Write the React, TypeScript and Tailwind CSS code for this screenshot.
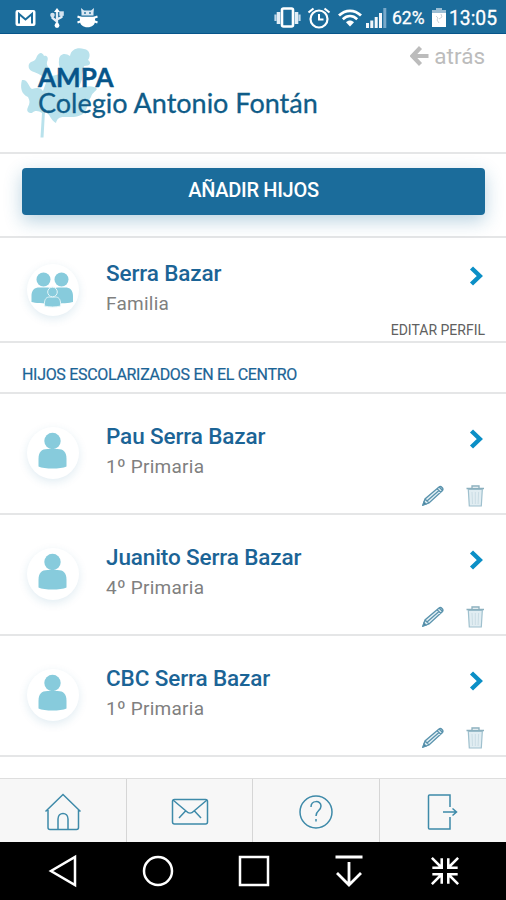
import React from 'react'

type Child = {
  name: string
  grade: string
}

const children: Child[] = [
  { name: 'Pau Serra Bazar', grade: '1º Primaria' },
  { name: 'Juanito Serra Bazar', grade: '4º Primaria' },
  { name: 'CBC Serra Bazar', grade: '1º Primaria' },
]

const StatusBar = () => {
  return (
    <div className="flex h-[34px] items-center justify-between border-b border-[#07558a] bg-[#1b6c9b] pl-[15px] pr-[9px] pt-[2px] text-white">
      <div className="flex items-center">
        <svg width="21" height="18" viewBox="0 0 21 18">
          <rect x="0.5" y="1" width="20" height="16" rx="2" fill="#fff" />
          <path d="M4 14.500V5l6.500 5.500L17 5v9.500" fill="none" stroke="#1b6c9b" strokeWidth="2" />
        </svg>
        <svg className="ml-[14px]" width="14" height="20" viewBox="0 0 14 20">
          <path d="M7 3v15M2.500 6v4L7 13.500M11.500 5v4L7 11.500" fill="none" stroke="#e4edf6" strokeWidth="2.300" />
          <path d="M7 0l3 4H4z" fill="#fff" />
          <circle cx="2.500" cy="7" r="2.300" fill="#d5e3ef" />
          <rect x="9.300" y="3.300" width="4.500" height="4.500" fill="#d5e3ef" />
          <circle cx="7" cy="17.500" r="2.400" fill="#fff" />
        </svg>
        <svg className="ml-[13px]" width="21" height="20" viewBox="0 0 21 20">
          <path d="M4.500 7.500V4.800L4 0l3 2.500h7L17 0l-.5 4.800v2.700z" fill="#dbe8f3" />
          <path d="M3 8.800h15v4.500c0 3.500-3 6-7.500 6s-7.500-2.500-7.500-6z" fill="#fff" />
          <path d="M.5 8.500l4 1.500M20.500 8.500l-4 1.500M.5 14.500l4-1.500M20.500 14.500l-4-1.500" stroke="#fff" strokeWidth="2" />
          <circle cx="8" cy="5" r="0.900" fill="#1b6c9b" />
          <circle cx="13" cy="5" r="0.900" fill="#1b6c9b" />
        </svg>
      </div>
      <div className="flex items-center">
        <svg width="27" height="22" viewBox="0 0 27 22">
          <rect x="8" y="1.500" width="11" height="18" rx="1.500" fill="none" stroke="#fff" strokeWidth="2.600" />
          <path d="M4.500 5v12M22.500 5v12" stroke="#e2edf6" strokeWidth="3.600" />
          <path d="M1.500 7.500v6.500M25.500 7.500v6.500" stroke="#bfd6e8" strokeWidth="2.200" />
        </svg>
        <svg className="ml-[6px]" width="24" height="22" viewBox="0 0 24 22">
          <circle cx="12" cy="12" r="8.500" fill="none" stroke="#fff" strokeWidth="2.200" />
          <path d="M12 7v5.500h4.500" fill="none" stroke="#fff" strokeWidth="2" />
          <path d="M1.500 5.500L6.500 1.500M22.500 5.500l-5-4" stroke="#fff" strokeWidth="2.200" />
        </svg>
        <svg className="ml-[7px]" width="24" height="18" viewBox="0 0 24 18">
          <path d="M1 6.500C7.500.2 16.500.2 23 6.500" fill="none" stroke="#fff" strokeWidth="2.800" />
          <path d="M4.800 10.200c4.400-4.100 10-4.100 14.400 0" fill="none" stroke="#fff" strokeWidth="2.600" />
          <path d="M8 13.300c2.500-2.300 5.500-2.300 8 0L12 17.500z" fill="#fff" />
        </svg>
        <svg className="ml-[4px]" width="21" height="20" viewBox="0 0 21 20">
          <path d="M0 15h3v5H0zM4.300 12.500h3V20h-3zM8.700 9h3v11h-3zM13 5h3v15h-3z" fill="#f3f7fb" />
          <path d="M17.300 0h3v20h-3z" fill="#78a9ca" />
        </svg>
        <span className="ml-[5px] w-[34px] whitespace-nowrap pt-[2px] font-[Roboto,sans-serif] text-[17.500px] leading-none [-webkit-text-stroke:0.300px]">62%</span>
        <svg className="ml-[6px]" width="14" height="19" viewBox="0 0 14 19">
          <path d="M4 0h6v2h4v4H0V2h4z" fill="#9bbdd3" />
          <path d="M0 5h14v14H0z" fill="#fff" />
          <path d="M4 8l2 2-1 2 2 3M9 6l1 3-3 2" fill="none" stroke="#ccd3d8" />
        </svg>
        <span className="ml-[3px] w-[48px] whitespace-nowrap pt-[2px] font-[Roboto,sans-serif] text-[19.300px] leading-none [-webkit-text-stroke:0.300px]">13:05</span>
      </div>
    </div>
  )
}

const Leaf = () => {
  return (
    <svg className="absolute left-[20px] top-[12px]" width="80" height="94" viewBox="20 46 80 94">
      <path
        d="M47 80C44 77 40 74 34 72C28 71 27 64 31 62C35 61 36 59 37 56C40 51 43 53 44 56C47 55 49 58 47 62C46 67 51 69 52 76L60 74C62 69 58 67 59 60C59 54 65 52 70 56C71 49 78 47 84 49C90 50 91 56 88 60C92 63 90 66 84 66L82 75C83 80 80 83 79 88C86 86 94 85 97 89C95 92 92 93 91 97C88 101 88 107 85 112C80 118 70 117 64 117C59 117 57 119 56 123C54 122 51 119 49 115L45 111L43.500 137.500H40.500L42 113C39 111 35 110 32 113C28 113 26 111 28 107C30 103 30 101 28 97C21 94 20 87 22 80C28 79 28 86 32 89C38 87 41 88 43 91Z"
        fill="#b9e2ec"
      />
    </svg>
  )
}

const Header = () => {
  return (
    <header className="relative flex h-[120px] justify-between border-b-2 border-[#e5e6e7]">
      <Leaf />
      <div className="relative pl-[38px] pt-[28px] font-[Lato,sans-serif] text-[#0f5c88]">
        <div className="text-[26px] font-bold leading-[30px] text-[#07558a] [-webkit-text-stroke:0.400px]">AMPA</div>
        <div className="-mt-[6px] whitespace-nowrap text-[27px] leading-[33px] [-webkit-text-stroke:0.300px]">Colegio Antonio Fontán</div>
      </div>
      <a className="mr-[21px] mt-[8px] flex h-[28px] items-center text-[#bcbcbc]">
        <svg width="19" height="20" viewBox="0 0 19 20">
          <path d="M10.500 1.500L2.500 10l8 8.500M3 10h15.500" fill="none" stroke="currentColor" strokeWidth="4.200" />
        </svg>
        <span className="ml-[5px] font-[Roboto,sans-serif] text-[22.500px] leading-none">atrás</span>
      </a>
    </header>
  )
}

const Avatar = ({ children }: { children: React.ReactNode }) => {
  return (
    <div className="ml-[27px] mt-[33px] flex h-[52px] w-[52px] shrink-0 items-center justify-center rounded-full bg-white pr-px shadow-[0_3px_10px_rgba(27,108,155,0.130)]">
      {children}
    </div>
  )
}

const FamilyIcon = () => {
  return (
    <svg width="44" height="36" viewBox="0 0 44 36" fill="#87cbdc">
      <circle cx="12.500" cy="7.500" r="7" />
      <circle cx="30.500" cy="7.500" r="7" />
      <path d="M.5 24c0-6 3-8.500 8-8.500h8c3 0 5 2 5.200 4.500.3-2.500 2.500-4.500 5.300-4.500h7c5 0 8 2.500 8 8.500v6c-6 2-35 2-41.500 0z" />
      <g stroke="#e5f5f8" strokeWidth="1">
        <path d="M13.500 31.500c0-4.500 2-6.500 5-6.500h6c3 0 5 2 5 6.500v2.500c-4 1.300-12 1.300-16 0z" />
        <circle cx="21.500" cy="20" r="4.800" />
      </g>
    </svg>
  )
}

const PersonIcon = () => {
  return (
    <svg className="mb-[4px]" width="30" height="38" viewBox="0 0 30 38" fill="#87cbdc">
      <circle cx="14.500" cy="9" r="8.200" />
      <path d="M.5 27c0-7 3-10 9-10h10c6 0 9 3 9 10v7.500c-6 2.700-22 2.700-28 0z" />
    </svg>
  )
}

const Chevron = () => {
  return (
    <svg className="mr-[22px] mt-[28px] shrink-0" width="15" height="20" viewBox="0 0 15 20">
      <path d="M2.500 2l8.300 8-8.300 8" fill="none" stroke="#0b8fc6" strokeWidth="4.400" />
    </svg>
  )
}

const PersonText = ({ name, detail }: { name: string; detail: string }) => {
  return (
    <div className="ml-[27px] flex-1 whitespace-nowrap pt-[21px] font-[Roboto,sans-serif]">
      <div className="text-[22.500px] font-medium leading-[28px] tracking-[-0.120px] text-[#1b6496]">{name}</div>
      <div className="mt-[3px] text-[19px] leading-[28px] tracking-[0.250px] text-[#808080]">{detail}</div>
    </div>
  )
}

const PencilIcon = () => {
  return (
    <svg width="23" height="21" viewBox="0 0 23 21" fill="#e3f0f5" stroke="#5a93ad" strokeWidth="1.300">
      <path d="M1 20l2-6L17 2c2-1.500 5 1.500 3.500 3.500L7 18zM3 14l4 4M15 3.700l4 3.800M17 2l3.700 3.500M5 16L17 5.500" />
      <path d="M1 20l1-3 2 2z" fill="#2b6788" />
    </svg>
  )
}

const TrashIcon = () => {
  return (
    <svg width="19" height="22" viewBox="0 0 19 22" fill="none">
      <path d="M2.300 4.500h14l-1 16.500h-12z" fill="#e1edf2" stroke="#9fc0ce" strokeWidth="1.200" />
      <path d="M6 7l.5 12M9.300 7v12M12.600 7l-.5 12" stroke="#cbdde5" />
      <path d="M.5 3.500h17.500M6 3V1h7v2" stroke="#8bb0be" strokeWidth="1.300" />
    </svg>
  )
}

const ChildRow = ({ child }: { child: Child }) => {
  return (
    <li className="flex h-[121px] flex-col border-b-2 border-[#e5e6e7]">
      <div className="flex h-[91px] items-start">
        <Avatar>
          <PersonIcon />
        </Avatar>
        <div className="flex flex-1 pt-[7px]">
          <PersonText name={child.name} detail={child.grade} />
          <Chevron />
        </div>
      </div>
      <div className="flex justify-end gap-[21px] pr-[21px]">
        <PencilIcon />
        <TrashIcon />
      </div>
    </li>
  )
}

const BottomMenu = () => {
  return (
    <nav className="grid h-[64px] grid-cols-4 divide-x divide-[#d6d6d6] border-t border-[#dedede] bg-[#f7f7f7] text-[#3e8aa9] [&>a]:flex [&>a]:items-center [&>a]:justify-center [&>a]:pt-[3px]">
      <a>
        <svg width="38" height="38" viewBox="0 0 38 38" fill="none" stroke="currentColor" strokeWidth="1.500">
          <path d="M1.500 18.500L19 1.500l17.500 17M4 17v17.500q0 2 2 2h26.500q2 0 2-2V17M14 36V26c0-7.500 10-7.500 10 0v10" />
        </svg>
      </a>
      <a className="pl-[2px]">
        <svg width="38" height="28" viewBox="0 0 38 28" fill="none" stroke="currentColor" strokeWidth="1.500">
          <rect x="1.500" y="1.500" width="35" height="24.500" rx="2" />
          <path d="M2 2l13 11c3 3 5 3 8 0L36 2M14.500 13L8 20M23.500 13l6.500 7" />
        </svg>
      </a>
      <a>
        <svg width="36" height="36" viewBox="0 0 36 36" fill="none" stroke="currentColor" strokeWidth="1.500">
          <circle cx="18" cy="18" r="16" />
          <path d="M13 13c0-7 10-7 10-1 0 5-5 4-5 10M18 25v2.500" />
        </svg>
      </a>
      <a>
        <svg width="32" height="38" viewBox="0 0 32 38" fill="none" stroke="currentColor" strokeWidth="1.500">
          <path d="M23 14V2H2.500q-1 0-1 1v32q0 1 1 1H23V24M16 19h13M25.500 15.500L29.500 19l-4 3.500" />
        </svg>
      </a>
    </nav>
  )
}

const SystemNav = () => {
  return (
    <div className="flex h-[58px] items-center bg-black pl-[47px] text-white">
      <svg width="31" height="34" viewBox="0 0 31 34">
        <path d="M28 3v28L4 17z" fill="none" stroke="currentColor" strokeWidth="2.500" />
      </svg>
      <svg className="ml-[63px]" width="34" height="34" viewBox="0 0 34 34">
        <circle cx="17" cy="17" r="14" fill="none" stroke="currentColor" strokeWidth="2.500" />
      </svg>
      <svg className="ml-[62px]" width="34" height="34" viewBox="0 0 34 34">
        <rect x="3" y="3" width="28" height="28" fill="none" stroke="currentColor" strokeWidth="2.500" />
      </svg>
      <svg className="ml-[63px]" width="30" height="34" viewBox="0 0 30 34" fill="none" stroke="currentColor" strokeWidth="2.800">
        <path d="M1.500 3h27M15 8v22M3 19l12 12 12-12" />
      </svg>
      <svg className="ml-[66px]" width="30" height="30" viewBox="0 0 32 32" fill="none" stroke="currentColor" strokeWidth="2.700">
        <path d="M2 2l10 10M12.500 2.500v10H2.500M30 2L20 12M19.500 2.500v10h10M2 30l10-10M12.500 29.500v-10h-10M30 30L20 20M19.500 29.500v-10h10" />
      </svg>
    </div>
  )
}

export default function App() {
  return (
    <div className="flex h-[900px] w-[506px] flex-col overflow-hidden bg-white">
      <StatusBar />
      <Header />
      <section className="h-[84px] border-b-2 border-[#e5e6e7] px-[21.500px] pt-[14px]">
        <button className="flex h-[47px] w-full items-center justify-center rounded bg-[#1b6c9b] pb-[3px] pl-px font-[Roboto,sans-serif] text-[20px] font-medium tracking-[-0.300px] text-white shadow-[0_6px_18px_rgba(27,108,155,0.300)]">
          AÑADIR HIJOS
        </button>
      </section>
      <section className="h-[105px] border-b-2 border-[#e5e6e7]">
        <div className="flex h-[82px] items-start">
          <div className="-mt-[7px]">
            <Avatar>
              <FamilyIcon />
            </Avatar>
          </div>
          <PersonText name="Serra Bazar" detail="Familia" />
          <Chevron />
        </div>
        <div className="pr-[21px] text-right font-[Roboto,sans-serif] text-[14px] leading-[20px] text-[#606060]">EDITAR PERFIL</div>
      </section>
      <h2 className="flex h-[51px] items-center border-b-2 border-[#e5e6e7] pl-[22px] pt-[14px] font-[Roboto,sans-serif] text-[16px] tracking-[-0.310px] text-[#1b6496] [-webkit-text-stroke:0.200px]">
        HIJOS ESCOLARIZADOS EN EL CENTRO
      </h2>
      <ul className="flex-1">
        {children.map((child) => (
          <ChildRow key={child.name} child={child} />
        ))}
      </ul>
      <BottomMenu />
      <SystemNav />
    </div>
  )
}
